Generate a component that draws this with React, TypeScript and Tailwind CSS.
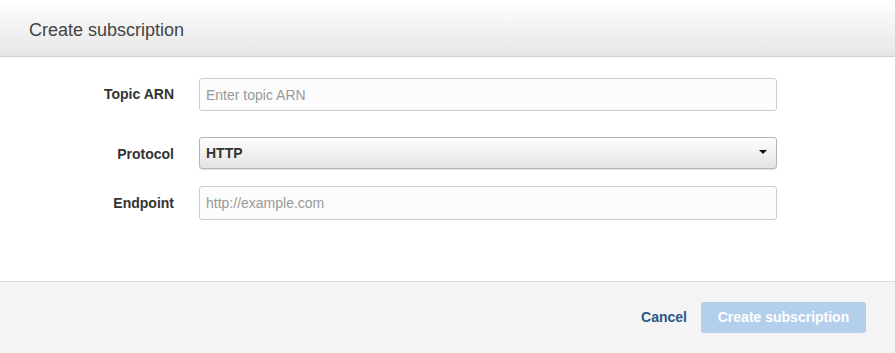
import React, { useState } from 'react';

const font = { fontFamily: '"Liberation Sans", Arial, sans-serif' };

export default function App() {
  const [topic, setTopic] = useState('');
  const [protocol, setProtocol] = useState('HTTP');
  const [endpoint, setEndpoint] = useState('');

  return (
    <div className="w-[895px] h-[353px] bg-white flex flex-col text-[#333]" style={font}>
      {/* Header */}
      <div className="h-[57px] shrink-0 flex items-center pl-[29px] pt-[5px] bg-gradient-to-b from-white to-[#e6e6e6] border-b border-[#d0d0d0]">
        <h2 className="text-[18px] text-[#444]">Create subscription</h2>
      </div>

      {/* Body */}
      <div className="flex-1 pt-[21px]">
        <div className="flex items-center">
          <label className="w-[174px] text-right text-[14px] font-bold text-[#333]">Topic ARN</label>
          <input
            value={topic}
            onChange={(e) => setTopic(e.target.value)}
            placeholder="Enter topic ARN"
            className="ml-[25px] w-[578px] h-[33px] px-[6px] text-[14px] bg-[#fcfcfc] border border-[#ccc] rounded-[3px] placeholder:text-[#999] outline-none"
            style={font}
          />
        </div>

        <div className="flex items-center mt-[26px]">
          <label className="w-[174px] text-right text-[14px] font-bold text-[#333] pt-[2px]">Protocol</label>
          <div className="relative ml-[25px] w-[578px] h-[32px]">
            <select
              value={protocol}
              onChange={(e) => setProtocol(e.target.value)}
              className="appearance-none w-full h-full pl-[6px] pr-8 text-[14px] font-bold text-[#333] bg-gradient-to-b from-white to-[#e3e3e3] border border-[#b5b5b5] rounded-[3px] shadow-[0_1px_1px_rgba(0,0,0,0.12)] outline-none"
              style={font}
            >
              <option>HTTP</option>
              <option>HTTPS</option>
              <option>Email</option>
              <option>SQS</option>
            </select>
            <span className="pointer-events-none absolute right-[10px] top-[13px] w-0 h-0 border-l-[4px] border-r-[4px] border-t-[4px] border-l-transparent border-r-transparent border-t-[#111]" />
          </div>
        </div>

        <div className="flex items-center mt-[17px]">
          <label className="w-[174px] text-right text-[14px] font-bold text-[#333]">Endpoint</label>
          <input
            value={endpoint}
            onChange={(e) => setEndpoint(e.target.value)}
            placeholder="http://example.com"
            className="ml-[25px] w-[578px] h-[34px] px-[6px] text-[14px] bg-[#fcfcfc] border border-[#ccc] rounded-[3px] placeholder:text-[#999] outline-none"
            style={font}
          />
        </div>
      </div>

      {/* Footer */}
      <div className="h-[72px] shrink-0 bg-[#f4f4f4] border-t border-[#ddd] flex items-center justify-end pr-[29px] pb-[1px]">
        <button className="text-[14px] font-bold text-[#2a5785] mr-[14px]" style={font}>Cancel</button>
        <button
          disabled
          className="w-[165px] h-[31px] rounded-[3px] bg-[#b3cfeb] text-white text-[14px] font-bold"
          style={font}
        >
          Create subscription
        </button>
      </div>
    </div>
  );
}
